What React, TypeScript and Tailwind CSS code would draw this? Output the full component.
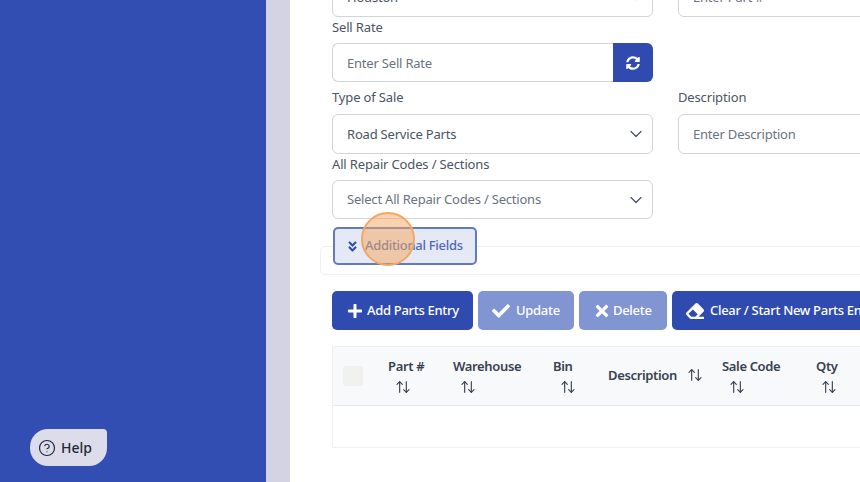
import { ArrowUpDown, ChevronDown, CircleHelp } from "lucide-react";
import { FaAngleDoubleDown, FaCheck, FaEraser, FaPlus, FaSyncAlt, FaTimes } from "react-icons/fa";

const font = { fontFamily: '"Noto Sans", "Open Sans", sans-serif' };

function Label({ children }: { children: string }) {
  return <div className="h-[16px] text-[13px] leading-[16px] tracking-[-0.15px] text-[#4b5563]">{children}</div>;
}

function Select({ text, cls, muted }: { text: string; cls: string; muted?: boolean }) {
  return (
    <div className={`flex w-[321px] shrink-0 items-center justify-between rounded-[6px] border border-[#d1d5db] bg-white pl-[14px] pr-[6px] text-[13px] tracking-[-0.2px] ${muted ? "text-[#6b7280]" : "text-[#4b5563]"} ${cls}`}>
      <span className="mt-[1px]">{text}</span>
      <ChevronDown size={20} strokeWidth={1.5} className="text-[#4b5563]" />
    </div>
  );
}

function Input({ text }: { text: string }) {
  return (
    <div className="flex h-[40px] w-[320px] shrink-0 items-center rounded-[6px] border border-[#d1d5db] pl-[14px] text-[13px] tracking-[-0.2px] text-[#6b7280]">
      <span className="mt-[1px]">{text}</span>
    </div>
  );
}

function Head({ label, w, inline, iconMl }: { label: string; w: string; inline?: boolean; iconMl?: string }) {
  return (
    <div className={`flex shrink-0 text-[13px] font-semibold tracking-[-0.35px] text-[#374151] ${w} ${inline ? "-mt-[2px] items-center gap-[10px]" : "flex-col items-start gap-[4px]"}`}>
      <span className="leading-[17px] whitespace-nowrap">{label}</span>
      <ArrowUpDown size={16} strokeWidth={1.7} className={iconMl ?? (inline ? "" : "ml-[7px]")} />
    </div>
  );
}

export default function App() {
  return (
    <div style={font} className="flex h-[482px] w-[860px] overflow-hidden bg-white">
      <aside className="flex w-[265.5px] shrink-0 items-end bg-[#324eb3] pb-[16px] pl-[30px]">
        <div className="flex h-[37px] w-[77px] items-center gap-[5px] rounded-[18px] rounded-tr-[4px] bg-[#dcdcea] pl-[8px] text-[14px] font-medium text-[#1f2937]">
          <CircleHelp size={18} strokeWidth={1.6} />
          <span>Help</span>
        </div>
      </aside>
      <div className="w-[24.5px] shrink-0 bg-[#d3d3e3]" />
      <main className="relative min-w-0 flex-1 overflow-hidden">
        <div className="-mt-[23px] w-[720px] pl-[42px]">
          <div className="flex gap-[25px]">
            <Select text="Houston" cls="h-[40px]" />
            <Input text="Enter Part #" />
          </div>
          <div className="mt-[2px] h-[24px]"><Label>Sell Rate</Label></div>
          <div className="flex h-[39px] w-[321px]">
            <div className="flex flex-1 items-center rounded-l-[6px] border border-r-0 border-[#d1d5db] pl-[14px] text-[13px] tracking-[-0.2px] text-[#6b7280]">
              <span className="mt-[2px]">Enter Sell Rate</span>
            </div>
            <div className="flex w-[40px] items-center justify-center rounded-r-[6px] bg-[#2f4bb0] text-white"><FaSyncAlt size={14} /></div>
          </div>
          <div className="flex gap-[25px] pt-[7px]">
            <div>
              <Label>Type of Sale</Label>
              <div className="h-[9px]" />
              <Select text="Road Service Parts" cls="h-[40px]" />
            </div>
            <div>
              <Label>Description</Label>
              <div className="h-[9px]" />
              <Input text="Enter Description" />
            </div>
          </div>
          <div className="mt-[2px]"><Label>All Repair Codes / Sections</Label></div>
          <div className="h-[8px]" />
          <Select text="Select All Repair Codes / Sections" cls="h-[39px]" muted />
          <div className="relative z-10 mt-[8px] ml-[1px] flex h-[38px] w-[144px] items-center gap-[6px] rounded-[5px] border-2 border-[#6379c0] bg-[#e5e8f5] pl-[11px] text-[13px] font-medium tracking-[-0.3px] text-[#5068b5]">
            <FaAngleDoubleDown size={13} className="shrink-0 text-[#2f4bb0]" />
            <span>Additional Fields</span>
          </div>
          <div className="-mt-[19px] -ml-[12px] h-[29px] w-[560px] rounded-[5px] border border-[#eef0f3]" />
          <div className="mt-[16px] flex h-[39px] gap-[5px] text-[13px] font-medium tracking-[-0.3px] text-white">
            <div className="flex w-[141px] shrink-0 items-center gap-[4px] rounded-[5px] bg-[#2f4bb0] pl-[15px]"><FaPlus size={16} className="shrink-0" />Add Parts Entry</div>
            <div className="flex w-[96px] shrink-0 items-center gap-[6px] rounded-[5px] bg-[#8195d2] pl-[14px]"><FaCheck size={18} className="shrink-0" />Update</div>
            <div className="flex w-[88px] shrink-0 items-center gap-[2px] rounded-[5px] bg-[#8195d2] pl-[14px]"><FaTimes size={18} className="shrink-0" />Delete</div>
            <div className="flex w-[210px] shrink-0 items-center gap-[6px] overflow-hidden rounded-[5px] bg-[#2f4bb0] pl-[14px] whitespace-nowrap"><FaEraser size={18} className="shrink-0" />Clear / Start New Parts Entry</div>
          </div>
          <div className="mt-[16px] w-[560px] border border-[#eef0f3]">
            <div className="flex h-[59px] items-center border-b border-[#e5e7eb] bg-[#f8f9fb]">
              <div className="flex w-[55px] shrink-0 pl-[10px]"><div className="h-[20px] w-[20px] rounded-[2px] bg-[#f1f1f0]" /></div>
              <Head label="Part #" w="w-[65px]" />
              <Head label="Warehouse" w="w-[100px]" />
              <Head label="Bin" w="w-[55px]" />
              <Head label="Description" w="w-[114px]" inline />
              <Head label="Sale Code" w="w-[94px]" />
              <Head label="Qty" w="w-[44px]" iconMl="ml-[5px]" />
            </div>
            <div className="h-[41px]" />
          </div>
        </div>
        <div className="absolute top-[212px] left-[71px] z-20 h-[54px] w-[54px] rounded-full border-2 border-[#f0a868] bg-[#f5a55c]/50" />
      </main>
    </div>
  );
}
